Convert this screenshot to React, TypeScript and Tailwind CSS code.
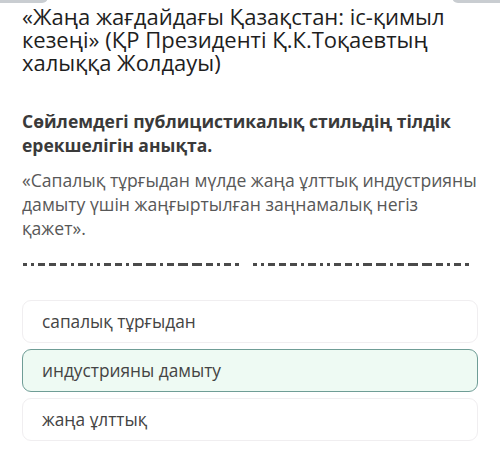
import React from 'react'

// dash pattern for the blank placeholders (widths in px)
const blank = [4, 3, 7, 7, 7, 3, 8, 3, 3, 7, 7, 3, 9, 10, 3, 7, 10, 10, 7, 3, 7, 4]

function Blank() {
    return (
        <div className="flex items-center gap-[4px]">
            {blank.map((w, i) => (
                <span key={i} className="h-[3px] bg-[#4a4a4a]" style={{ width: w }} />
            ))}
        </div>
    )
}

const options = [
    { text: 'сапалық тұрғыдан', selected: false },
    { text: 'индустрияны дамыту', selected: true },
    { text: 'жаңа ұлттық', selected: false },
]

export default function App() {
    return (
        <div className="w-[500px] h-[462px] bg-white overflow-hidden relative font-['Open_Sans',sans-serif]">
            {/* bits of buttons cut off at the top */}
            <div className="absolute left-[-10px] top-[-10px] w-[58px] h-[13px] rounded-md bg-[#c9cdd1]" />
            <div className="absolute right-[-10px] top-[-10px] w-[58px] h-[13px] rounded-md bg-[#c9cdd1]" />

            <div className="px-[22px] pt-[5px]">
                <h1 className="text-[22px] leading-[23px] text-[#1e1e1e]">
                    «Жаңа жағдайдағы Қазақстан: іс-қимыл кезеңі» (ҚР Президенті Қ.К.Тоқаевтың халыққа Жолдауы)
                </h1>

                <p className="mt-[35px] text-[17.5px] leading-[24px] font-bold text-[#3a3a3a]">
                    Сөйлемдегі публицистикалық стильдің тілдік ерекшелігін анықта.
                </p>
                <p className="mt-[11px] text-[17.6px] leading-[24px] text-[#585858]">
                    «Сапалық тұрғыдан мүлде жаңа ұлттық индустрияны дамыту үшін жаңғыртылған заңнамалық негіз қажет».
                </p>

                <div className="mt-[23px] pl-[1px] flex gap-[14px]">
                    <Blank />
                    <Blank />
                </div>

                <div className="mt-[34px] flex flex-col gap-[6px]">
                    {options.map((o) => (
                        <div
                            key={o.text}
                            className={
                                o.selected
                                    ? 'h-[43px] rounded-[9px] border border-[#6f9d96] bg-[#eefaf3] pl-[19px] flex items-center text-[17.3px] text-[#444]'
                                    : 'h-[43px] rounded-[9px] border border-[#f0eef0] bg-white pl-[19px] flex items-center text-[17.3px] text-[#444]'
                            }
                        >
                            {o.text}
                        </div>
                    ))}
                </div>
            </div>
        </div>
    )
}
